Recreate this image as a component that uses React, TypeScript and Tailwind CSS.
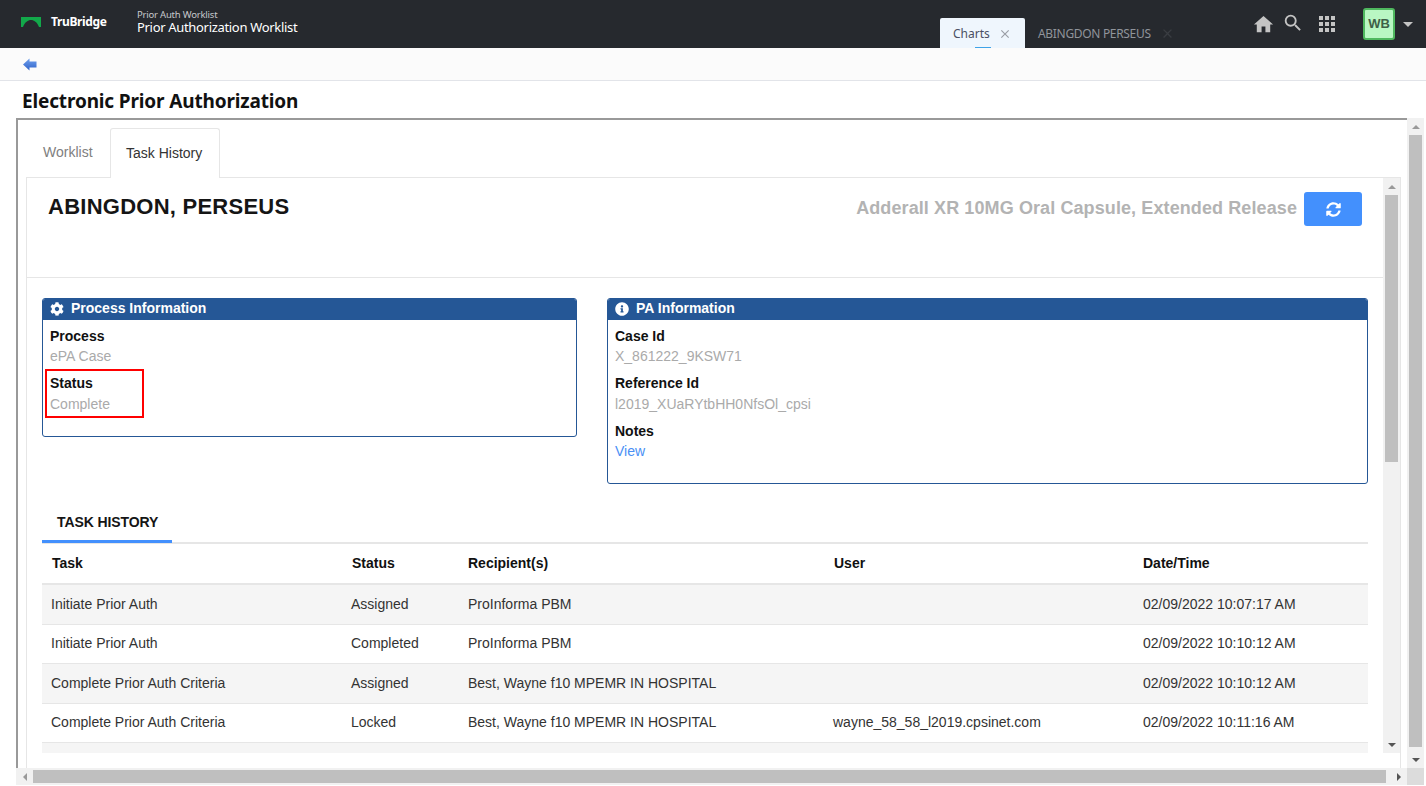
import { FaCog, FaInfoCircle, FaSyncAlt } from 'react-icons/fa'
import { MdHome, MdSearch, MdApps, MdArrowDropDown, MdClose } from 'react-icons/md'

// ---------------------------------------------------------------------------
// Data
// ---------------------------------------------------------------------------

const HISTORY_ROWS = [
  { task: 'Initiate Prior Auth', status: 'Assigned', recipient: 'ProInforma PBM', user: '', date: '02/09/2022 10:07:17 AM', h: 'h-[40px]' },
  { task: 'Initiate Prior Auth', status: 'Completed', recipient: 'ProInforma PBM', user: '', date: '02/09/2022 10:10:12 AM', h: 'h-[39px] pb-[1px]' },
  { task: 'Complete Prior Auth Criteria', status: 'Assigned', recipient: 'Best, Wayne f10 MPEMR IN HOSPITAL', user: '', date: '02/09/2022 10:10:12 AM', h: 'h-[40px]' },
  { task: 'Complete Prior Auth Criteria', status: 'Locked', recipient: 'Best, Wayne f10 MPEMR IN HOSPITAL', user: 'wayne_58_58_l2019.cpsinet.com', date: '02/09/2022 10:11:16 AM', h: 'h-[39px] pb-[1px]' },
]

// ---------------------------------------------------------------------------
// Small parts
// ---------------------------------------------------------------------------

function Field({ label, value, link }: { label: string; value: string; link?: boolean }) {
  return (
    <div className="h-[47.4px] pt-[7px]">
      <div className="text-[14px] leading-[18px] font-bold text-[#111]">{label}</div>
      <div className={`mt-[2.3px] text-[14px] leading-[18px] ${link ? 'text-[#4a90f5]' : 'text-[#aaa]'}`}>{value}</div>
    </div>
  )
}

function Arrow({ dir }: { dir: 'up' | 'down' | 'left' | 'right' }) {
  if (dir === 'up') return <div className="border-x-[4px] border-b-[4px] border-x-transparent border-b-[#999]" />
  if (dir === 'down') return <div className="border-x-[4px] border-t-[4px] border-x-transparent border-t-[#555]" />
  if (dir === 'left') return <div className="border-y-[4px] border-r-[4px] border-y-transparent border-r-[#999]" />
  return <div className="border-y-[4px] border-l-[4px] border-y-transparent border-l-[#555]" />
}

function VScroll({ thumb }: { thumb: string }) {
  return (
    <div className="w-[17px] shrink-0 bg-[#f1f1f1] flex flex-col items-center">
      <div className="h-[17px] shrink-0 flex items-center justify-center">
        <Arrow dir="up" />
      </div>
      <div className={`w-[13px] bg-[#bfbfbf] ${thumb}`} />
      <div className="flex-1" />
      <div className="h-[17px] shrink-0 flex items-center justify-center">
        <Arrow dir="down" />
      </div>
    </div>
  )
}

// ---------------------------------------------------------------------------
// Page
// ---------------------------------------------------------------------------

export default function App() {
  return (
    <div className="relative h-[786px] w-[1426px] overflow-hidden bg-white flex flex-col font-['Liberation_Sans',sans-serif] text-[#222]">
      {/* Top bar */}
      <header className="h-[48px] shrink-0 bg-[#26292e] flex font-['Noto_Sans',sans-serif]">
        <div className="w-[137px] shrink-0 flex items-center pl-[21px] pb-[4px]">
          <svg width="20" height="10" viewBox="0 0 20 10">
            <path d="M0 0H20V10H18C16 5 13 3 10 3C7 3 4 5 2 10H0Z" fill="#12a84a" />
          </svg>
          <span className="ml-[10px] text-[12px] font-bold text-white tracking-[-0.35px]">TruBridge</span>
        </div>
        <div className="w-[803px] shrink-0 pt-[9px] text-white">
          <div className="text-[9.5px] leading-[11px] text-[#c6c8cc] tracking-[-0.2px]">Prior Auth Worklist</div>
          <div className="text-[13px] leading-[14px] tracking-[-0.32px]">Prior Authorization Worklist</div>
        </div>
        <div className="flex items-end">
          <div className="relative w-[85px] h-[30px] bg-[#eff6fd] rounded-t-[2px] flex items-center pl-[13px] pt-[1px] text-[12px] text-[#4a4f63]">
            Charts
            <MdClose className="ml-[8px] text-[#9a9ea6]" size={14} />
            <div className="absolute bottom-0 left-[35px] w-[16px] h-[1px] bg-[#3fa3e8]" />
          </div>
          <div className="h-[30px] flex items-center pl-[13px] pt-[1px] text-[12px] text-[#90949b] tracking-[-0.32px]">
            ABINGDON PERSEUS
            <MdClose className="ml-[9px] text-[#3a3d42]" size={15} />
          </div>
        </div>
        <div className="flex-1 flex items-center justify-end text-[#c4c4c4]">
          <MdHome size={23} />
          <MdSearch size={22} className="ml-[7px] mb-[2px]" />
          <MdApps size={24} className="ml-[11px]" />
          <div className="ml-[24px] w-[32px] h-[32px] rounded-[3px] border-2 border-[#4fb85f] bg-[#b9f7c3] flex items-center justify-center text-[13px] font-bold text-[#3f5f48] font-['Liberation_Sans',sans-serif]">
            WB
          </div>
          <MdArrowDropDown size={24} className="ml-[1px] mr-[6px]" />
        </div>
      </header>

      {/* Back bar */}
      <div className="h-[33px] shrink-0 bg-[#fbfbfb] border-b border-[#e2e4e9] flex items-center pl-[23px]">
        <svg width="14" height="13" viewBox="0 0 14 13" className="mt-[1px]">
          <defs>
            <linearGradient id="backArrow" x1="0" y1="0" x2="0" y2="1">
              <stop offset="0" stopColor="#6fa0ee" />
              <stop offset="1" stopColor="#2f62c8" />
            </linearGradient>
          </defs>
          <path d="M0 6.5L6.5 0.5V3.5H13.5V9.5H6.5V12.5Z" fill="url(#backArrow)" />
        </svg>
      </div>

      {/* Title */}
      <h1 className="h-[37px] shrink-0 pl-[22px] pt-[5px] text-[19px] leading-[30px] font-bold tracking-[-0.15px] text-[#111] font-['Noto_Sans',sans-serif]">
        Electronic Prior Authorization
      </h1>

      {/* Outer frame */}
      <div className="flex-1 min-h-0 flex flex-col pl-[16px] pr-[2px] pb-[1px]">
        <div className="flex-1 min-h-0 flex">
          <div className="flex-1 min-w-0 border-l-2 border-t-2 border-[#999] pl-[8px] pr-[6px] pt-[8px] flex flex-col">
            {/* Tabs */}
            <div className="h-[50px] shrink-0 flex text-[14px] relative z-10">
              <div className="w-[84px] pl-[17px] pt-[14px] text-[#808080]">Worklist</div>
              <div className="w-[110px] h-[50px] bg-white border border-b-0 border-[#e6e6e6] rounded-t-[3px] pl-[15px] pt-[14px] text-[#333]">
                Task History
              </div>
            </div>

            {/* Tab panel */}
            <div className="flex-1 min-h-0 flex -mt-px border-l border-t border-r border-[#e6e6e6] overflow-hidden">
              <div className="flex-1 min-w-0 flex flex-col">
                <div className="h-[100px] shrink-0 border-b border-[#e6e6e6] flex justify-between items-start pl-[21px] pr-[21px] pt-[14px]">
                  <div className="text-[22px] leading-[30px] font-bold tracking-[0.25px] text-[#151515]">ABINGDON, PERSEUS</div>
                  <div className="flex items-start">
                    <div className="mt-[1px] text-[18px] leading-[30px] font-bold tracking-[0.1px] text-[#b3b3b3]">
                      Adderall XR 10MG Oral Capsule, Extended Release
                    </div>
                    <button className="ml-[7px] w-[58px] h-[34px] bg-[#4390fd] rounded-[3px] flex items-center justify-center text-white">
                      <FaSyncAlt size={15} />
                    </button>
                  </div>
                </div>

                <div className="flex-1 min-h-0 overflow-hidden px-[15px] pt-[20px]">
                  {/* Info cards */}
                  <div className="flex items-start gap-[30px]">
                    <section className="w-[535px] h-[139px] border border-[#255796] rounded-[3px] overflow-hidden">
                      <div className="h-[21px] bg-[#255796] flex items-center pl-[7px] pb-[2px] text-white text-[14px] font-bold">
                        <FaCog size={14} />
                        <span className="ml-[7px]">Process Information</span>
                      </div>
                      <div className="pl-[7px]">
                        <Field label="Process" value="ePA Case" />
                        <Field label="Status" value="Complete" />
                      </div>
                    </section>
                    <section className="w-[761px] h-[186px] border border-[#255796] rounded-[3px] overflow-hidden">
                      <div className="h-[21px] bg-[#255796] flex items-center pl-[7px] pb-[2px] text-white text-[14px] font-bold">
                        <FaInfoCircle size={14} />
                        <span className="ml-[7px]">PA Information</span>
                      </div>
                      <div className="pl-[7px]">
                        <Field label="Case Id" value="X_861222_9KSW71" />
                        <Field label="Reference Id" value="l2019_XUaRYtbHH0NfsOl_cpsi" />
                        <Field label="Notes" value="View" link />
                      </div>
                    </section>
                  </div>

                  {/* Task history */}
                  <div className="mt-[21px] h-[39px] border-b-2 border-[#e6e6e6] flex">
                    <div className="w-[130px] h-[38px] border-b-[3px] border-[#4390fd] pl-[15px] pt-[8px] text-[14px] leading-[18px] font-bold tracking-[-0.1px] text-[#151515]">
                      TASK HISTORY
                    </div>
                  </div>
                  <div className="h-[41px] border-b-2 border-[#e6e6e6] grid grid-cols-[300px_116px_366px_309px_1fr] items-center text-[14px] font-bold text-[#111] pl-[10px]">
                    <div>Task</div>
                    <div>Status</div>
                    <div>Recipient(s)</div>
                    <div>User</div>
                    <div>Date/Time</div>
                  </div>
                  {HISTORY_ROWS.map((r, i) => (
                    <div
                      key={i}
                      className={`${r.h} border-b border-[#e6e6e6] grid grid-cols-[300px_117px_365px_310px_1fr] items-center text-[14px] text-[#333] pl-[9px] ${i % 2 === 0 ? 'bg-[#f5f5f5]' : 'bg-white'}`}
                    >
                      <div>{r.task}</div>
                      <div>{r.status}</div>
                      <div>{r.recipient}</div>
                      <div>{r.user}</div>
                      <div>{r.date}</div>
                    </div>
                  ))}
                  <div className="h-[12px] bg-[#f5f5f5]" />
                </div>
              </div>
              <VScroll thumb="h-[267px]" />
            </div>
            <div className="h-[15px] shrink-0 border-l border-r border-[#e6e6e6]" />
          </div>
          <VScroll thumb="h-[612px]" />
        </div>

        {/* Horizontal scrollbar */}
        <div className="h-[17px] shrink-0 bg-[#f1f1f1] flex items-center">
          <div className="w-[17px] flex justify-center">
            <Arrow dir="left" />
          </div>
          <div className="w-[1353px] h-[13px] bg-[#bfbfbf]" />
          <div className="flex-1" />
          <div className="w-[17px] flex justify-center">
            <Arrow dir="right" />
          </div>
          <div className="w-[17px] h-[17px] bg-[#dcdcdc]" />
        </div>
      </div>

      {/* Annotation */}
      <div className="absolute left-[45px] top-[369px] w-[99px] h-[49px] border-2 border-[#f00]" />
    </div>
  )
}
